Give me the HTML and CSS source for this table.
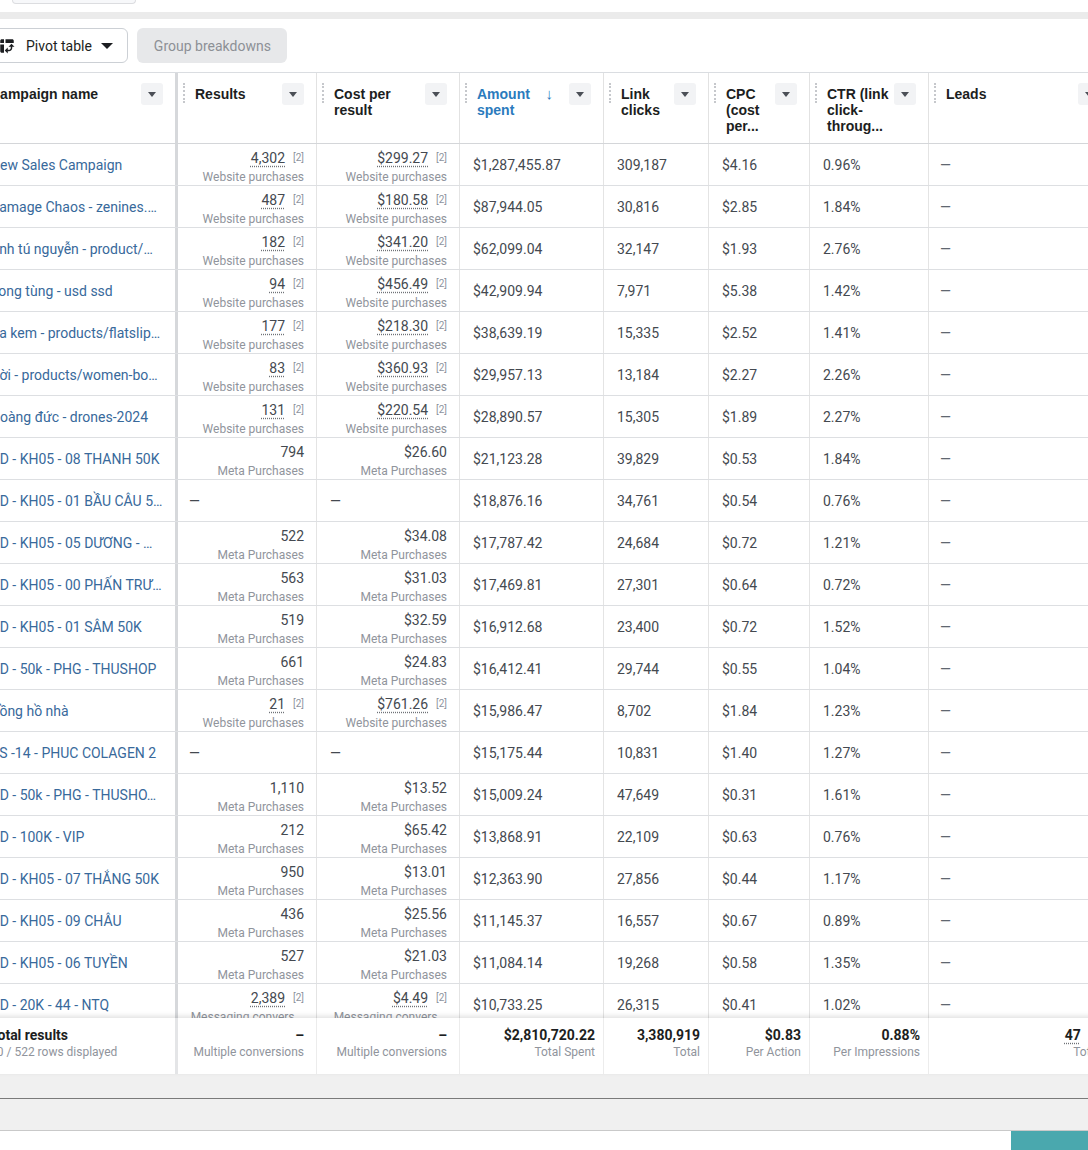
FILE: index.html
```html
<!DOCTYPE html>
<html lang="vi">
<head>
<meta charset="utf-8">
<title>Campaigns</title>
<link rel="stylesheet" href="styles.css">
</head>
<body>
<div class="top"><div class="stub"></div></div>
<div class="band"></div>
<div class="toolbar">
  <div class="btn pivot">
    <svg viewBox="0 0 24 24"><path fill="#1c1e21" d="M10 8h11V5c0-1.1-.9-2-2-2h-9v5zM3 8h5V3H5c-1.1 0-2 .9-2 2v3zm2 13h3V10H3v9c0 1.1.9 2 2 2zm8 1l-4-4 4-4zm1-9l4-4 4 4zm.58 6H13v-2h1.58c1.330 0 2.42-1.08 2.42-2.42V13h2v1.58c0 2.44-1.98 4.42-4.420 4.42z"/></svg>
    <span>Pivot table</span><span class="caret-dn"></span>
  </div>
  <div class="btn group">Group breakdowns</div>
</div>

<div class="table">
  <div class="row head">
    <div class="hc first"><div class="hl">Campaign name</div><div class="dd"></div></div>
    <div class="hc"><div class="handle"></div><div class="hl">Results</div><div class="dd"></div></div>
    <div class="hc"><div class="handle"></div><div class="hl">Cost per<br>result</div><div class="dd"></div></div>
    <div class="hc"><div class="handle"></div><div class="hl blue">Amount<br>spent</div><span class="arr">↓</span><div class="dd"></div></div>
    <div class="hc"><div class="handle"></div><div class="hl">Link<br>clicks</div><div class="dd"></div></div>
    <div class="hc"><div class="handle"></div><div class="hl">CPC<br>(cost<br>per...</div><div class="dd"></div></div>
    <div class="hc"><div class="handle"></div><div class="hl">CTR (link<br>click-<br>throug...</div><div class="dd"></div></div>
    <div class="hc"><div class="handle"></div><div class="hl">Leads</div><div class="dd"></div></div>
  </div>

  <div class="body">
    <div class="row d"><div class="c name">New Sales Campaign</div><div class="c r"><div class="v"><span class="u">4,302</span><span class="fn">[2]</span></div><div class="s">Website purchases</div></div><div class="c r"><div class="v"><span class="u">$299.27</span><span class="fn">[2]</span></div><div class="s">Website purchases</div></div><div class="c m">$1,287,455.87</div><div class="c m">309,187</div><div class="c m">$4.16</div><div class="c m">0.96%</div><div class="c l">—</div></div>
    <div class="row d"><div class="c name">Damage Chaos - zenines.…</div><div class="c r"><div class="v"><span class="u">487</span><span class="fn">[2]</span></div><div class="s">Website purchases</div></div><div class="c r"><div class="v"><span class="u">$180.58</span><span class="fn">[2]</span></div><div class="s">Website purchases</div></div><div class="c m">$87,944.05</div><div class="c m">30,816</div><div class="c m">$2.85</div><div class="c m">1.84%</div><div class="c l">—</div></div>
    <div class="row d"><div class="c name">Anh tú nguyễn - product/…</div><div class="c r"><div class="v"><span class="u">182</span><span class="fn">[2]</span></div><div class="s">Website purchases</div></div><div class="c r"><div class="v"><span class="u">$341.20</span><span class="fn">[2]</span></div><div class="s">Website purchases</div></div><div class="c m">$62,099.04</div><div class="c m">32,147</div><div class="c m">$1.93</div><div class="c m">2.76%</div><div class="c l">—</div></div>
    <div class="row d"><div class="c name">Song tùng - usd ssd</div><div class="c r"><div class="v"><span class="u">94</span><span class="fn">[2]</span></div><div class="s">Website purchases</div></div><div class="c r"><div class="v"><span class="u">$456.49</span><span class="fn">[2]</span></div><div class="s">Website purchases</div></div><div class="c m">$42,909.94</div><div class="c m">7,971</div><div class="c m">$5.38</div><div class="c m">1.42%</div><div class="c l">—</div></div>
    <div class="row d"><div class="c name">Da kem - products/flatslip…</div><div class="c r"><div class="v"><span class="u">177</span><span class="fn">[2]</span></div><div class="s">Website purchases</div></div><div class="c r"><div class="v"><span class="u">$218.30</span><span class="fn">[2]</span></div><div class="s">Website purchases</div></div><div class="c m">$38,639.19</div><div class="c m">15,335</div><div class="c m">$2.52</div><div class="c m">1.41%</div><div class="c l">—</div></div>
    <div class="row d"><div class="c name">Đời - products/women-bo…</div><div class="c r"><div class="v"><span class="u">83</span><span class="fn">[2]</span></div><div class="s">Website purchases</div></div><div class="c r"><div class="v"><span class="u">$360.93</span><span class="fn">[2]</span></div><div class="s">Website purchases</div></div><div class="c m">$29,957.13</div><div class="c m">13,184</div><div class="c m">$2.27</div><div class="c m">2.26%</div><div class="c l">—</div></div>
    <div class="row d"><div class="c name">Hoàng đức - drones-2024</div><div class="c r"><div class="v"><span class="u">131</span><span class="fn">[2]</span></div><div class="s">Website purchases</div></div><div class="c r"><div class="v"><span class="u">$220.54</span><span class="fn">[2]</span></div><div class="s">Website purchases</div></div><div class="c m">$28,890.57</div><div class="c m">15,305</div><div class="c m">$1.89</div><div class="c m">2.27%</div><div class="c l">—</div></div>
    <div class="row d"><div class="c name">OD - KH05 - 08 THANH 50K</div><div class="c r"><div class="v">794</div><div class="s">Meta Purchases</div></div><div class="c r"><div class="v">$26.60</div><div class="s">Meta Purchases</div></div><div class="c m">$21,123.28</div><div class="c m">39,829</div><div class="c m">$0.53</div><div class="c m">1.84%</div><div class="c l">—</div></div>
    <div class="row d"><div class="c name">OD - KH05 - 01 BẦU CÂU 5…</div><div class="c e1">—</div><div class="c e2">—</div><div class="c m">$18,876.16</div><div class="c m">34,761</div><div class="c m">$0.54</div><div class="c m">0.76%</div><div class="c l">—</div></div>
    <div class="row d"><div class="c name">OD - KH05 - 05 DƯƠNG - …</div><div class="c r"><div class="v">522</div><div class="s">Meta Purchases</div></div><div class="c r"><div class="v">$34.08</div><div class="s">Meta Purchases</div></div><div class="c m">$17,787.42</div><div class="c m">24,684</div><div class="c m">$0.72</div><div class="c m">1.21%</div><div class="c l">—</div></div>
    <div class="row d"><div class="c name">OD - KH05 - 00 PHẤN TRƯ…</div><div class="c r"><div class="v">563</div><div class="s">Meta Purchases</div></div><div class="c r"><div class="v">$31.03</div><div class="s">Meta Purchases</div></div><div class="c m">$17,469.81</div><div class="c m">27,301</div><div class="c m">$0.64</div><div class="c m">0.72%</div><div class="c l">—</div></div>
    <div class="row d"><div class="c name">OD - KH05 - 01 SÂM 50K</div><div class="c r"><div class="v">519</div><div class="s">Meta Purchases</div></div><div class="c r"><div class="v">$32.59</div><div class="s">Meta Purchases</div></div><div class="c m">$16,912.68</div><div class="c m">23,400</div><div class="c m">$0.72</div><div class="c m">1.52%</div><div class="c l">—</div></div>
    <div class="row d"><div class="c name">OD - 50k - PHG - THUSHOP</div><div class="c r"><div class="v">661</div><div class="s">Meta Purchases</div></div><div class="c r"><div class="v">$24.83</div><div class="s">Meta Purchases</div></div><div class="c m">$16,412.41</div><div class="c m">29,744</div><div class="c m">$0.55</div><div class="c m">1.04%</div><div class="c l">—</div></div>
    <div class="row d"><div class="c name">Đồng hồ nhà</div><div class="c r"><div class="v"><span class="u">21</span><span class="fn">[2]</span></div><div class="s">Website purchases</div></div><div class="c r"><div class="v"><span class="u">$761.26</span><span class="fn">[2]</span></div><div class="s">Website purchases</div></div><div class="c m">$15,986.47</div><div class="c m">8,702</div><div class="c m">$1.84</div><div class="c m">1.23%</div><div class="c l">—</div></div>
    <div class="row d"><div class="c name">DS -14 - PHUC COLAGEN 2</div><div class="c e1">—</div><div class="c e2">—</div><div class="c m">$15,175.44</div><div class="c m">10,831</div><div class="c m">$1.40</div><div class="c m">1.27%</div><div class="c l">—</div></div>
    <div class="row d"><div class="c name">OD - 50k - PHG - THUSHO…</div><div class="c r"><div class="v">1,110</div><div class="s">Meta Purchases</div></div><div class="c r"><div class="v">$13.52</div><div class="s">Meta Purchases</div></div><div class="c m">$15,009.24</div><div class="c m">47,649</div><div class="c m">$0.31</div><div class="c m">1.61%</div><div class="c l">—</div></div>
    <div class="row d"><div class="c name">OD - 100K - VIP</div><div class="c r"><div class="v">212</div><div class="s">Meta Purchases</div></div><div class="c r"><div class="v">$65.42</div><div class="s">Meta Purchases</div></div><div class="c m">$13,868.91</div><div class="c m">22,109</div><div class="c m">$0.63</div><div class="c m">0.76%</div><div class="c l">—</div></div>
    <div class="row d"><div class="c name">OD - KH05 - 07 THẮNG 50K</div><div class="c r"><div class="v">950</div><div class="s">Meta Purchases</div></div><div class="c r"><div class="v">$13.01</div><div class="s">Meta Purchases</div></div><div class="c m">$12,363.90</div><div class="c m">27,856</div><div class="c m">$0.44</div><div class="c m">1.17%</div><div class="c l">—</div></div>
    <div class="row d"><div class="c name">OD - KH05 - 09 CHÂU</div><div class="c r"><div class="v">436</div><div class="s">Meta Purchases</div></div><div class="c r"><div class="v">$25.56</div><div class="s">Meta Purchases</div></div><div class="c m">$11,145.37</div><div class="c m">16,557</div><div class="c m">$0.67</div><div class="c m">0.89%</div><div class="c l">—</div></div>
    <div class="row d"><div class="c name">OD - KH05 - 06 TUYỀN</div><div class="c r"><div class="v">527</div><div class="s">Meta Purchases</div></div><div class="c r"><div class="v">$21.03</div><div class="s">Meta Purchases</div></div><div class="c m">$11,084.14</div><div class="c m">19,268</div><div class="c m">$0.58</div><div class="c m">1.35%</div><div class="c l">—</div></div>
    <div class="row d"><div class="c name">OD - 20K - 44 - NTQ</div><div class="c r"><div class="v"><span class="u">2,389</span><span class="fn">[2]</span></div><div class="s">Messaging convers...</div></div><div class="c r"><div class="v"><span class="u">$4.49</span><span class="fn">[2]</span></div><div class="s">Messaging convers...</div></div><div class="c m">$10,733.25</div><div class="c m">26,315</div><div class="c m">$0.41</div><div class="c m">1.02%</div><div class="c l">—</div></div>
  </div>

  <div class="row foot">
    <div class="fc first"><div class="fv">Total results</div><div class="fs">50 / 522 rows displayed</div></div>
    <div class="fc wide"><div class="fv">–</div><div class="fs">Multiple conversions</div></div>
    <div class="fc wide"><div class="fv">–</div><div class="fs">Multiple conversions</div></div>
    <div class="fc"><div class="fv">$2,810,720.22</div><div class="fs">Total Spent</div></div>
    <div class="fc"><div class="fv">3,380,919</div><div class="fs">Total</div></div>
    <div class="fc"><div class="fv">$0.83</div><div class="fs">Per Action</div></div>
    <div class="fc"><div class="fv">0.88%</div><div class="fs">Per Impressions</div></div>
    <div class="fc wide"><div class="fv"><span class="u">47</span><span class="fn">[2]</span></div><div class="fs">Total</div></div>
  </div>
</div>

<div class="scroll1"></div>
<div class="scroll2"></div>
<div class="bottom"><div class="teal"></div></div>
</body>
</html>
```

FILE: styles.css
```css
* { box-sizing: border-box; }
html, body { margin: 0; padding: 0; overflow: hidden; }
body {
  width: 1088px;
  height: 1150px;
  background: #fff;
  font-family: Roboto, "Liberation Sans", Arial, sans-serif;
  font-size: 14px;
  color: #4b4f56;
}

.top { height: 12px; }
.stub {
  margin-left: 12px;
  width: 124px;
  height: 4px;
  border: 1px solid #dcdde0;
  border-top: 0;
  border-radius: 0 0 6px 6px;
  background: #f7f8fa;
}
.band { height: 7px; background: #ebebeb; }

.toolbar {
  height: 53px;
  display: flex;
  align-items: center;
  gap: 9px;
  margin-left: -12px;
}
.btn {
  height: 35px;
  border-radius: 6px;
  display: flex;
  align-items: center;
  font-size: 14px;
}
.pivot {
  border: 1px solid #ccd0d5;
  padding: 0 14px 0 9px;
  background: #fff;
  color: #1c1e21;
}
.pivot svg { width: 18px; height: 18px; margin-right: 10px; }
.caret-dn {
  width: 0; height: 0;
  border-left: 6px solid transparent;
  border-right: 6px solid transparent;
  border-top: 6px solid #1c1e21;
  margin-left: 9px;
}
.group { background: #e7e8ea; color: #8d9096; padding: 0 16px 0 17px; }

.table { margin-left: -22px; width: 1135px; }
.row {
  display: grid;
  grid-template-columns: 200px 139px 143px 144px 105px 101px 119px 184px;
}
.head {
  height: 72px;
  border-top: 1px solid #dadde1;
  border-bottom: 1px solid #d4d6d9;
}
.hc {
  display: flex;
  align-items: flex-start;
  padding: 13px 12px 0 5px;
  border-right: 1px solid #e2e2e2;
}
.hc.first { padding-left: 12px; border-right: 3px solid #d6d8db; }
.handle {
  width: 2px;
  height: 20px;
  margin-top: -3px;
  margin-right: 10px;
  border-left: 2px dotted #c6c8cc;
  flex: none;
}
.hl {
  flex: 1;
  font-family: "Liberation Sans", Arial, sans-serif;
  font-weight: 700;
  font-size: 14px;
  line-height: 16px;
  color: #1c1e21;
}
.hl.blue { color: #2b7bbd; }
.arr {
  color: #2b7bbd;
  font-size: 15px;
  line-height: 16px;
  font-weight: 500;
  margin-right: 16px;
}
.dd {
  width: 22px;
  height: 22px;
  margin-top: -3px;
  background: #f2f3f5;
  border-radius: 3px;
  display: flex;
  align-items: center;
  justify-content: center;
  flex: none;
}
.dd::after {
  content: "";
  border-left: 4px solid transparent;
  border-right: 4px solid transparent;
  border-top: 5px solid #4b4f56;
}

.body { height: 874px; overflow: hidden; }
.row.d { height: 42px; border-bottom: 1px solid #dddfe2; }
.c {
  border-right: 1px solid #e4e4e4;
  display: flex;
  flex-direction: column;
  justify-content: center;
  white-space: nowrap;
  overflow: hidden;
  color: #444950;
}
.c.name {
  padding-left: 12px;
  color: #38699b;
  border-right: 3px solid #d6d8db;
  text-overflow: ellipsis;
}
.c.r { align-items: flex-end; padding: 4px 12px 0 0; }
.c.m { padding-left: 13px; }
.c.l { padding-left: 11px; color: #606770; }
.c.e1 { padding-left: 11px; }
.c.e2 { padding-left: 13px; }
.v { line-height: 18px; color: #444950; }
.s { font-size: 12px; line-height: 16px; margin-top: 2px; color: #90949c; }
.u {
  text-decoration: underline dotted #6f7277;
  text-underline-offset: 3px;
}
.fn {
  font-size: 10px;
  color: #8d949e;
  margin-left: 8px;
  vertical-align: 2px;
}

.foot {
  height: 56px;
  background: #fff;
  position: relative;
  box-shadow: 0 -2px 5px rgba(0, 0, 0, 0.12);
}
.fc {
  padding-top: 8px;
  padding-right: 8px;
  display: flex;
  flex-direction: column;
  align-items: flex-end;
  border-right: 1px solid #ececec;
  white-space: nowrap;
  overflow: hidden;
}
.fc.wide { padding-right: 12px; }
.fc.first {
  align-items: flex-start;
  padding-left: 12px;
  border-right: 3px solid #e4e5e7;
}
.fv { font-weight: 700; font-size: 14px; line-height: 18px; color: #1c1e21; }
.fs { font-size: 12px; line-height: 16px; color: #90949c; }

.scroll1 { height: 25px; background: #f0f0f0; border-bottom: 1px solid #7a7a7a; }
.scroll2 { height: 32px; background: #f0f0f0; border-bottom: 1px solid #c9c9c9; }
.bottom { display: flex; justify-content: flex-end; }
.teal { width: 77px; height: 22px; background: #4aa8ae; }
```
